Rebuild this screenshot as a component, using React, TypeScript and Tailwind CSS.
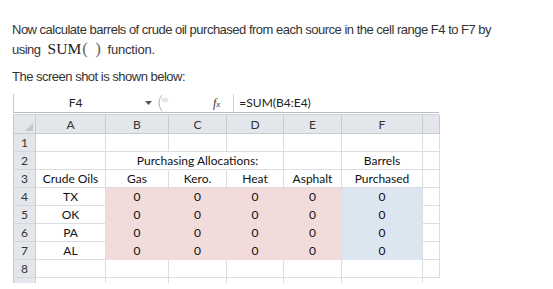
import React from "react";

const W = ["w-[70px]", "w-[63px]", "w-[58px]", "w-[57px]", "w-[58px]", "w-[81px]", "w-[17px]"];
const LETTERS = ["A", "B", "C", "D", "E", "F", ""];

type Fill = "none" | "pink" | "blue";

function Cell({ i, text, fill = "none", noRight = false, overflow = false }: { i: number; text?: string; fill?: Fill; noRight?: boolean; overflow?: boolean }) {
  const bg = fill === "pink" ? "bg-[#f2dcdb] border-b-[#f2dcdb]" : fill === "blue" ? "bg-[#dce6f1] border-b-[#dce6f1]" : "bg-white border-b-[#dcdde0]";
  const right = noRight ? "border-r-transparent" : fill === "pink" ? "border-r-[#f2dcdb]" : "border-r-[#dcdde0]";
  return (
    <div className={`${W[i]} h-full shrink-0 border-r border-b ${bg} ${right} flex items-center justify-center relative ${overflow ? "overflow-visible z-10" : "overflow-hidden"}`}>
      {text ? <span className="whitespace-nowrap leading-none pt-[1px]">{text}</span> : null}
    </div>
  );
}

function RowNum({ n }: { n: string }) {
  return (
    <div className="w-[22px] h-full shrink-0 bg-[#e3e6ea] border-r border-b border-r-[#c6cbd1] border-b-[#d3d7dc] flex items-center justify-center text-[#333]">
      <span className="leading-none pt-[1px]">{n}</span>
    </div>
  );
}

type RowSpec = { n: string; cells: { text?: string; fill?: Fill; noRight?: boolean; overflow?: boolean }[] };

const rows: RowSpec[] = [
  { n: "1", cells: [{}, {}, {}, {}, {}, {}, {}] },
  {
    n: "2",
    cells: [{}, { noRight: true }, { text: "Purchasing Allocations:", noRight: true, overflow: true }, {}, {}, { text: "Barrels" }, {}],
  },
  {
    n: "3",
    cells: [{ text: "Crude Oils" }, { text: "Gas" }, { text: "Kero." }, { text: "Heat" }, { text: "Asphalt" }, { text: "Purchased" }, {}],
  },
  ...["TX", "OK", "PA", "AL"].map((s, idx) => ({
    n: String(idx + 4),
    cells: [
      { text: s },
      { text: "0", fill: "pink" as Fill },
      { text: "0", fill: "pink" as Fill },
      { text: "0", fill: "pink" as Fill },
      { text: "0", fill: "pink" as Fill },
      { text: "0", fill: "blue" as Fill },
      {},
    ],
  })),
  { n: "8", cells: [{}, {}, {}, {}, {}, {}, {}] },
];

export default function App() {
  return (
    <div className="w-[553px] h-[289px] bg-white overflow-hidden relative">
      <div className="pl-[12px] pt-[20px] font-['Liberation_Sans',Arial,sans-serif] text-[13px] leading-[19px] text-[#333]">
        <p className="tracking-[-0.5px]">
          Now calculate barrels of crude oil purchased from each source in the cell range F4 to F7 by
          <br />
          using
          <span className="font-['Liberation_Serif','Times_New_Roman',serif] text-[15.5px] tracking-normal text-[#222] ml-[7px]">SUM</span>
          <span className="font-['Liberation_Serif','Times_New_Roman',serif] text-[17px] text-[#666] ml-[1px]">(</span>
          <span className="inline-block w-[8px]"></span>
          <span className="font-['Liberation_Serif','Times_New_Roman',serif] text-[17px] text-[#666]">)</span>
          <span className="ml-[7px] tracking-[-0.2px]">function.</span>
        </p>
        <p className="mt-[8px] tracking-[-0.5px]">The screen shot is shown below:</p>
      </div>

      <div className="mt-[8px] ml-[13px] w-[426px] font-[Lato,'Open_Sans',sans-serif] text-[12px] text-[#111]">
        {/* formula bar */}
        <div className="h-[18px] border-l border-l-[#c3c7cc] flex items-center bg-white">
          <div className="w-[123px] text-center text-[#222] leading-none">F4</div>
          <svg width="7" height="4" viewBox="0 0 7 4" className="ml-[8px]">
            <path d="M0 0 L7 0 L3.5 4 Z" fill="#555" />
          </svg>
          <svg width="16" height="18" viewBox="0 0 16 18" className="ml-[4px]">
            <path d="M6 1 Q0 9 6 17" stroke="#b9bec4" strokeWidth="1.2" fill="none" />
            <ellipse cx="9" cy="6" rx="3" ry="2" fill="#e8ebee" stroke="#d4d8dc" strokeWidth="0.6" />
          </svg>
          <span className="ml-[41px] font-['Liberation_Serif',serif] italic text-[12px] text-[#333] leading-none">
            f<span className="text-[9px]">x</span>
          </span>
          <div className="ml-[13px] w-px h-[18px] bg-[#d0d4d8]"></div>
          <span className="ml-[5px] text-[#222] leading-none">=SUM(B4:E4)</span>
        </div>
        <div className="h-[3px] border-t border-b border-t-[#b9bdc2] border-b-[#d2d5d9] bg-white"></div>

        {/* column header */}
        <div className="h-[19px] flex border-l border-l-[#c3c7cc]">
          <div className="w-[22px] h-full shrink-0 bg-[#e3e6ea] border-r border-b border-r-[#c6cbd1] border-b-[#c6cbd1] relative">
            <svg width="8" height="8" viewBox="0 0 8 8" className="absolute right-[2px] bottom-[2px]">
              <path d="M8 0 L8 8 L0 8 Z" fill="#c2c6cb" />
            </svg>
          </div>
          {LETTERS.map((l, i) => (
            <div
              key={i}
              className={`${W[i]} h-full shrink-0 bg-[#e3e6ea] border-r border-b border-r-[#c6cbd1] border-b-[#c6cbd1] flex items-center justify-center text-[#333]`}
            >
              <span className="leading-none pt-[1px]">{l}</span>
            </div>
          ))}
        </div>

        {rows.map((r) => (
          <div key={r.n} className="h-[18px] flex border-l border-l-[#c3c7cc]">
            <RowNum n={r.n} />
            {r.cells.map((c, i) => (
              <Cell key={i} i={i} text={c.text} fill={c.fill} noRight={c.noRight} overflow={c.overflow} />
            ))}
          </div>
        ))}

        {/* partial row 9 */}
        <div className="h-[5px] flex border-l border-l-[#c3c7cc] overflow-hidden">
          <div className="w-[22px] h-[18px] shrink-0 bg-[#e3e6ea] border-r border-r-[#c6cbd1]"></div>
          {W.map((w, i) => (
            <div key={i} className={`${w} h-[18px] shrink-0 border-r border-r-[#dcdde0]`}></div>
          ))}
        </div>
      </div>
    </div>
  );
}
